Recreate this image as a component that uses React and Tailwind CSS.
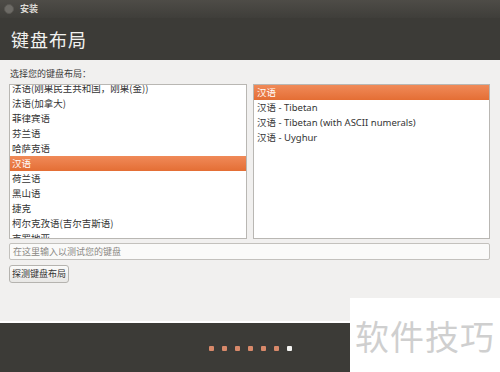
const font = { fontFamily: '"Noto Sans", "Noto Sans CJK SC", sans-serif' };

const leftItems = [
  "法语(刚果民主共和国，刚果(金))",
  "法语(加拿大)",
  "菲律宾语",
  "芬兰语",
  "哈萨克语",
  "汉语",
  "荷兰语",
  "黑山语",
  "捷克",
  "柯尔克孜语(吉尔吉斯语)",
  "克罗地亚",
];

const rightItems = ["汉语", "汉语 - Tibetan", "汉语 - Tibetan (with ASCII numerals)", "汉语 - Uyghur"];

const dots = [0, 1, 2, 3, 4, 5, 6];

export default function App() {
  return (
    <div
      className="relative w-[500px] h-[372px] overflow-hidden bg-[#f1f0ef] flex flex-col"
      style={{ fontFamily: '"Noto Sans CJK SC", "Noto Sans", sans-serif' }}
    >
      {/* title bar */}
      <div className="h-[18px] flex items-center gap-[6px] px-[4px] bg-gradient-to-b from-[#4e4c47] to-[#3f3e3a]">
        <div className="w-[10px] h-[10px] rounded-full bg-[#6d6b66] border border-[#5a5853]" />
        <span className="text-[9px] font-bold text-[#dcdad5]">安装</span>
      </div>

      {/* header */}
      <div className="h-[42px] bg-[#3c3b37] flex items-center px-[11px]">
        <span className="text-[18px] text-[#f2f2f0] tracking-[1px]">键盘布局</span>
      </div>

      {/* body */}
      <div className="flex-1 flex flex-col px-[9px] pt-[7px] border-b-2 border-white">
        <div className="text-[9px] text-[#3c3c3c] h-[17px] leading-[14px] pl-[1px]">选择您的键盘布局：</div>
        <div className="flex gap-[6px] h-[155px]">
          <div className="w-[238px] bg-white border border-[#b9b7b3] overflow-hidden">
            <div className="-mt-[4px]">
              {leftItems.map((t) =>
                t === "汉语" ? (
                  <div
                    key={t}
                    className="h-[15px] leading-[15px] text-[9.5px] px-[2px] text-white bg-gradient-to-b from-[#f08a58] to-[#e46e34]"
                  >
                    {t}
                  </div>
                ) : (
                  <div key={t} className="h-[15px] leading-[15px] text-[9.5px] px-[2px] text-[#333]">
                    {t}
                  </div>
                )
              )}
            </div>
          </div>
          <div className="w-[237px] bg-white border border-[#b9b7b3] overflow-hidden">
            {rightItems.map((t, i) =>
              i === 0 ? (
                <div
                  key={t}
                  className="h-[15px] leading-[15px] text-[9.5px] px-[3px] text-white bg-gradient-to-b from-[#f08a58] to-[#e46e34]"
                >
                  {t}
                </div>
              ) : (
                <div key={t} className="h-[15px] leading-[15px] text-[9.5px] px-[3px] text-[#333]" style={font}>
                  {t}
                </div>
              )
            )}
          </div>
        </div>
        <div className="mt-[4px] h-[17px] w-[481px] bg-[#fafaf9] border border-[#c3c1bd] rounded-[2px] flex items-center px-[3px]">
          <span className="text-[9px] text-[#8a8884]">在这里输入以测试您的键盘</span>
        </div>
        <div className="mt-[5px] flex">
          <div className="h-[18px] w-[60px] border border-[#b5b3af] rounded-[3px] bg-gradient-to-b from-[#fbfbfa] to-[#e8e7e5] flex items-center justify-center">
            <span className="text-[9px] text-[#333]">探测键盘布局</span>
          </div>
        </div>
        <div className="mt-auto flex justify-end gap-[6px] pr-[3px]">
          <div className="w-[54px] h-[22px] border border-[#b5b3af] rounded-[3px] bg-[#f7f7f6] -mb-[2px]" />
          <div className="w-[54px] h-[22px] border border-[#b5b3af] rounded-[3px] bg-[#f7f7f6] -mb-[2px]" />
        </div>
      </div>

      {/* footer */}
      <div className="h-[49px] bg-[#3c3b37] flex items-center justify-center pt-[1px]">
        <div className="flex gap-[8px] ml-[1px]">
          {dots.map((d) => (
            <div
              key={d}
              className={
                d === 6
                  ? "w-[5px] h-[5px] rounded-[1px] bg-[#f4f4f2]"
                  : "w-[5px] h-[5px] rounded-[1px] bg-[#d8896a]"
              }
            />
          ))}
        </div>
      </div>

      {/* watermark */}
      <div className="absolute left-[350px] top-[298px] w-[150px] h-[74px] bg-white flex items-center justify-center">
        <span className="text-[34px] text-[#cfcfcf] tracking-[1px]">软件技巧</span>
      </div>
    </div>
  );
}
